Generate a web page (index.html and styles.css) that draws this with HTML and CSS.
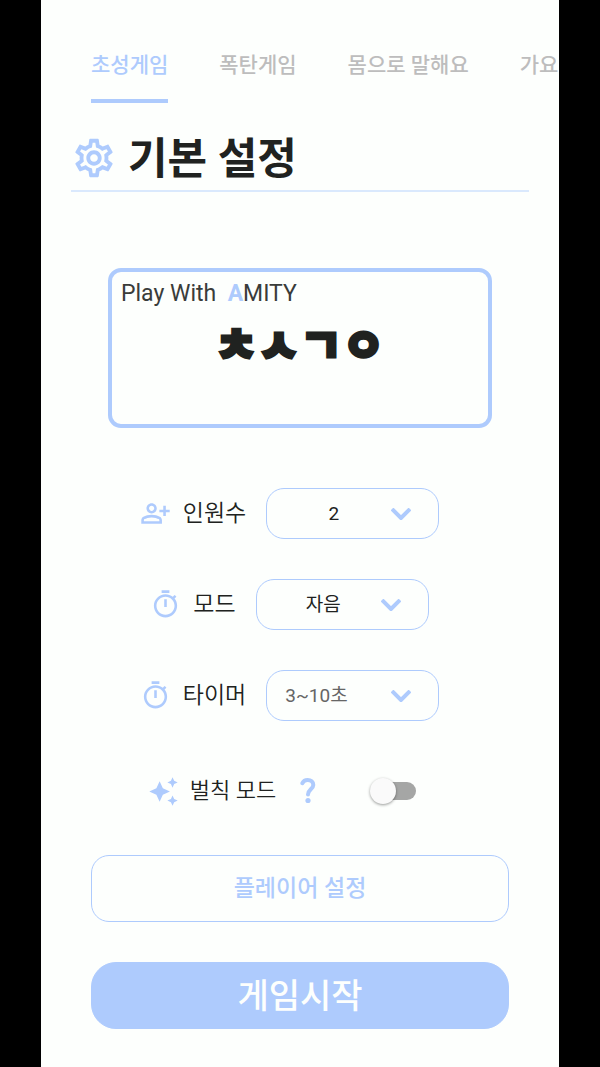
FILE: index.html
```html
<!DOCTYPE html>
<html lang="ko">
  <head>
    <meta charset="UTF-8" />
    <meta name="viewport" content="width=device-width, initial-scale=1" />
    <title>기본 설정</title>
    <link rel="stylesheet" href="styles.css">
  </head>
  <body>
    <div class="phone">
      <nav class="tabs">
        <a href="#" class="tab active">초성게임</a>
        <a href="#" class="tab">폭탄게임</a>
        <a href="#" class="tab">몸으로 말해요</a>
        <a href="#" class="tab">가요</a>
      </nav>

      <header class="title">
        <svg class="gear" viewBox="0 0 24 24"><path d="M19.43 12.98c.04-.32.07-.64.07-.98 0-.34-.03-.66-.07-.98l2.11-1.65c.19-.15.24-.42.12-.64l-2-3.46c-.09-.16-.26-.25-.44-.25-.06 0-.12.01-.17.03l-2.49 1c-.52-.4-1.08-.73-1.69-.98l-.38-2.65C14.46 2.18 14.25 2 14 2h-4c-.25 0-.46.18-.49.42l-.38 2.65c-.61.25-1.17.59-1.69.98l-2.49-1c-.06-.02-.12-.03-.18-.03-.17 0-.34.09-.43.25l-2 3.46c-.13.22-.07.49.12.64l2.11 1.65c-.04.32-.07.65-.07.98 0 .33.03.66.07.98l-2.11 1.65c-.19.15-.24.42-.12.64l2 3.46c.09.16.26.25.44.25.06 0 .12-.01.17-.03l2.49-1c.52.4 1.08.73 1.69.98l.38 2.65c.03.24.24.42.49.42h4c.25 0 .46-.18.49-.42l.38-2.65c.61-.25 1.17-.59 1.69-.98l2.49 1c.06.02.12.03.18.03.17 0 .34-.09.43-.25l2-3.46c.12-.22.07-.49-.12-.64l-2.11-1.65zm-1.98-1.71c.04.31.05.52.05.73 0 .21-.02.43-.05.73l-.14 1.13.89.7 1.08.84-.7 1.21-1.27-.51-1.04-.42-.9.68c-.43.32-.84.56-1.25.73l-1.06.43-.16 1.13-.2 1.35h-1.4l-.19-1.35-.16-1.13-1.06-.43c-.43-.18-.83-.41-1.23-.71l-.91-.7-1.06.43-1.27.51-.7-1.21 1.08-.84.89-.7-.14-1.13c-.03-.31-.05-.54-.05-.74s.02-.43.05-.73l.14-1.13-.89-.7-1.08-.84.7-1.21 1.27.51 1.04.42.9-.68c.43-.32.84-.56 1.25-.73l1.06-.43.16-1.13.2-1.35h1.39l.19 1.35.16 1.13 1.06.43c.43.18.83.41 1.23.71l.91.7 1.06-.43 1.27-.51.7 1.21-1.07.85-.89.7.14 1.13zM12 8c-2.21 0-4 1.79-4 4s1.79 4 4 4 4-1.79 4-4-1.79-4-4-4zm0 6c-1.1 0-2-.9-2-2s.9-2 2-2 2 .9 2 2-.9 2-2 2z" /></svg>
        <h1>기본 설정</h1>
      </header>

      <section class="card">
        <p class="brand">Play With &nbsp;<b>A</b>MITY</p>
        <p class="word">ㅊㅅㄱㅇ</p>
      </section>

      <form class="settings">
        <div class="row">
          <svg class="icon" viewBox="0 0 24 24"><path d="M20 9V6h-2v3h-3v2h3v3h2v-3h3V9h-3zM9 12c2.21 0 4-1.79 4-4s-1.79-4-4-4-4 1.79-4 4 1.79 4 4 4zm0-6c1.1 0 2 .9 2 2s-.9 2-2 2-2-.9-2-2 .9-2 2-2zm6.39 8.56C13.71 13.7 11.53 13 9 13s-4.71.7-6.39 1.56C1.61 15.07 1 16.1 1 17.22V20h16v-2.78c0-1.12-.61-2.15-1.61-2.66zM15 18H3v-.78c0-.38.2-.72.52-.88C4.71 15.73 6.63 15 9 15s4.29.73 5.48 1.34c.32.16.52.5.52.88V18z" /></svg>
          <label for="people">인원수</label>
          <div class="dropdown">
            <select id="people">
              <option>2</option>
            </select>
            <svg class="chevron" viewBox="0 0 20 12"><path d="M1 1l9 9 9-9" /></svg>
          </div>
        </div>

        <div class="row">
          <svg class="icon" viewBox="0 0 24 24"><path d="M15 1H9v2h6V1zm-4 13h2V8h-2v6zm8.03-6.61 1.42-1.42c-.43-.51-.9-.99-1.41-1.41l-1.42 1.42C16.07 4.74 14.12 4 12 4c-4.97 0-9 4.03-9 9s4.02 9 9 9 9-4.03 9-9c0-2.12-.74-4.07-1.97-5.61zM12 20c-3.87 0-7-3.13-7-7s3.13-7 7-7 7 3.13 7 7-3.13 7-7 7z" /></svg>
          <label for="mode">모드</label>
          <div class="dropdown">
            <select id="mode">
              <option>자음</option>
            </select>
            <svg class="chevron" viewBox="0 0 20 12"><path d="M1 1l9 9 9-9" /></svg>
          </div>
        </div>

        <div class="row">
          <svg class="icon" viewBox="0 0 24 24"><path d="M15 1H9v2h6V1zm-4 13h2V8h-2v6zm8.03-6.61 1.42-1.42c-.43-.51-.9-.99-1.41-1.41l-1.42 1.42C16.07 4.74 14.12 4 12 4c-4.97 0-9 4.03-9 9s4.02 9 9 9 9-4.03 9-9c0-2.12-.74-4.07-1.97-5.61zM12 20c-3.87 0-7-3.13-7-7s3.13-7 7-7 7 3.13 7 7-3.13 7-7 7z" /></svg>
          <label for="timer">타이머</label>
          <div class="dropdown">
            <select id="timer" class="hint">
              <option>3~10초</option>
            </select>
            <svg class="chevron" viewBox="0 0 20 12"><path d="M1 1l9 9 9-9" /></svg>
          </div>
        </div>

        <div class="row penalty">
          <svg class="icon" viewBox="0 0 24 24"><path d="m19 9 1.25-2.75L23 5l-2.75-1.25L19 1l-1.25 2.75L15 5l2.75 1.25L19 9zm-7.5.5L9 4 6.5 9.5 1 12l5.5 2.5L9 20l2.5-5.5L17 12l-5.5-2.5zM19 15l-1.25 2.75L15 19l2.75 1.25L19 23l1.25-2.75L23 19l-2.75-1.25L19 15z" /></svg>
          <label for="penalty">벌칙 모드</label>
          <button type="button" class="help" aria-label="도움말">
            <svg viewBox="0 0 16 26"><path d="M2.4 5.2C3.4 3 5.3 2 7.6 2c3.4 0 5.7 2 5.7 4.9 0 4.2-5.3 4.7-5.3 9.5" /><circle cx="8" cy="22.5" r="2.6" /></svg>
          </button>
          <input type="checkbox" id="penalty" class="switch">
        </div>
      </form>

      <div class="actions">
        <button type="button" class="btn player">플레이어 설정</button>
        <button type="button" class="btn start">게임시작</button>
      </div>
    </div>
  </body>
</html>
```
FILE: styles.css
```css
* {
  box-sizing: border-box;
}

body {
  margin: 0;
  background: #000;
  font-family: Roboto, "Noto Sans CJK KR", sans-serif;
  color: #202220;
}

.phone {
  min-height: 100vh;
  margin: 0 41px;
  background: #fdfffd;
  overflow: hidden;
}

h1,
p {
  margin: 0;
}

button,
select {
  font-family: inherit;
}

.tabs {
  display: flex;
  gap: 51px;
  padding: 49px 0 0 50px;
  overflow: hidden;
}

.tab {
  flex: none;
  padding-bottom: 18px;
  border-bottom: 4px solid transparent;
  color: #bdbdbd;
  font-size: 21px;
  font-weight: 500;
  line-height: 32px;
  text-decoration: none;
}

.tab.active {
  color: #aecbfd;
  border-color: #aecbfd;
}

.title {
  display: flex;
  align-items: center;
  gap: 11px;
  margin: 22px 30px 0;
  border-bottom: 2px solid #dae9fd;
}

.title h1 {
  padding-top: 4px;
  font-size: 43px;
  font-weight: 700;
  line-height: 61px;
}

.gear {
  width: 46px;
  height: 46px;
  fill: #aecbfd;
}

.card {
  min-height: 160px;
  margin: 76px 67px 0;
  padding: 8px 9px;
  border: 4px solid #aecbfd;
  border-radius: 13px;
}

.brand {
  color: #3a3c3a;
  font-size: 23px;
  line-height: 28px;
}

.brand b {
  color: #aecbfd;
}

.word {
  font-size: 46px;
  font-weight: 900;
  line-height: 76px;
  text-align: center;
  -webkit-text-stroke: 3px #202220;
}

.settings {
  display: flex;
  flex-direction: column;
  gap: 40px;
  margin-top: 60px;
}

.row {
  display: flex;
  justify-content: center;
  align-items: center;
  padding-right: 21px;
}

.row label {
  margin: 0 20px 0 12px;
  font-size: 23px;
  font-weight: 350;
  line-height: 32px;
}

.icon {
  width: 31px;
  height: 31px;
  fill: #aecbfd;
}

.dropdown {
  position: relative;
}

.dropdown select {
  display: block;
  width: 173px;
  height: 51px;
  padding: 0 38px 0 0;
  appearance: none;
  background: transparent;
  border: 1px solid #aecbfd;
  border-radius: 18px;
  color: #202220;
  font-size: 19px;
  text-align-last: center;
}

.dropdown .hint {
  padding-left: 18px;
  color: #666;
  text-align-last: left;
}

.chevron {
  position: absolute;
  top: 20px;
  right: 28px;
  width: 20px;
  height: 12px;
  fill: none;
  stroke: #aecbfd;
  stroke-width: 4;
  pointer-events: none;
}

.penalty {
  min-height: 60px;
  padding-right: 36px;
}

.penalty label {
  margin: 0 24px 0 11px;
  font-size: 22px;
}

.help {
  display: flex;
  padding: 0;
  background: none;
  border: 0;
}

.help svg {
  width: 16px;
  height: 26px;
  fill: #aecbfd;
}

.help path {
  fill: none;
  stroke: #aecbfd;
  stroke-width: 4;
  stroke-linecap: round;
}

.switch {
  display: flex;
  align-items: center;
  width: 43px;
  height: 18px;
  margin: 0 0 0 57px;
  appearance: none;
  background: #a5a6a5;
  border-radius: 9px;
}

.switch::before {
  content: "";
  flex: none;
  width: 26px;
  height: 26px;
  margin-left: -3px;
  background: #fafafa;
  border-radius: 50%;
  box-shadow: 0 1px 3px rgba(0, 0, 0, 0.4);
}

.switch:checked {
  justify-content: flex-end;
  background: #aecbfd;
}

.actions {
  display: flex;
  flex-direction: column;
  gap: 40px;
  padding: 34px 50px 38px;
}

.btn {
  min-height: 67px;
  padding: 0 0 5px;
  border: 1px solid #aecbfd;
  font-weight: 500;
}

.player {
  background: transparent;
  border-radius: 18px;
  color: #aecbfd;
  font-size: 23px;
}

.start {
  background: #aecbfd;
  border-radius: 25px;
  color: #fdfffd;
  font-size: 34px;
}
```
